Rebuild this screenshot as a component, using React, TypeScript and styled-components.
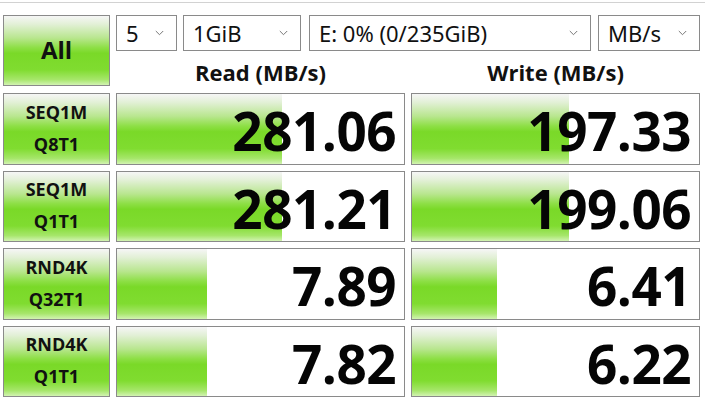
import styled, { createGlobalStyle } from 'styled-components';

const GlobalStyle = createGlobalStyle`
  html, body {
    margin: 0;
    padding: 0;
    background: #ffffff;
  }
  body {
    font-family: "Open Sans", "Noto Sans", "Liberation Sans", sans-serif;
  }
`;

const barGradient = `linear-gradient(
  to bottom,
  #f6f6f6 0%,
  #e2f0d6 12%,
  #b8e68e 32%,
  #8ddf45 46%,
  #7ad928 54%,
  #80dc30 78%,
  #a6e66a 92%,
  #d2f3b2 100%
)`;

const Window = styled.div`
  width: 705px;
  height: 400px;
  overflow: hidden;
  background: #ffffff;
  border-top: 1px solid #d2d2d2;
  margin-top: 2px;
  box-sizing: border-box;
`;

const Grid = styled.div`
  display: grid;
  grid-template-columns: 107px 289px 289px;
  grid-template-rows: 72px repeat(4, 71.5px);
  column-gap: 6px;
  row-gap: 6px;
  padding: 12px 0 0 3px;
`;

const GreenButton = styled.div`
  box-sizing: border-box;
  border: 1px solid #8a8a8a;
  background: ${barGradient};
  display: flex;
  flex-direction: column;
  align-items: center;
  justify-content: center;
  color: #111;
  font-weight: 700;
`;

const AllButton = styled(GreenButton)`
  height: 71px;
  font-size: 24px;
  padding-bottom: 2px;
`;

const TestLabel = styled(GreenButton)`
  font-size: 18px;
  line-height: 32px;
  padding-bottom: 2px;
`;

const TopArea = styled.div`
  grid-column: 2 / 4;
  display: flex;
  flex-direction: column;
`;

const Selects = styled.div`
  display: flex;
  gap: 6px;
`;

const Select = styled.div<{ $w: number; $ml?: number }>`
  box-sizing: border-box;
  width: ${(p) => p.$w}px;
  margin-left: ${(p) => p.$ml ?? 0}px;
  height: 36px;
  border: 1px solid #8a8a8a;
  background: #fff;
  display: flex;
  align-items: center;
  justify-content: space-between;
  padding: 0 12px 0 9px;
  font-family: "Noto Sans", "Open Sans", sans-serif;
  font-size: 22px;
  color: #111;
`;

const Headers = styled.div`
  display: grid;
  grid-template-columns: 289px 289px;
  column-gap: 6px;
  flex: 1;
`;

const Header = styled.div`
  display: flex;
  align-items: center;
  justify-content: center;
  font-weight: 700;
  font-size: 22px;
  color: #111;
  padding-top: 6px;
`;

const ValueCell = styled.div`
  position: relative;
  box-sizing: border-box;
  border: 1px solid #8a8a8a;
  background: #fff;
  display: flex;
  align-items: center;
  justify-content: flex-end;
`;

const Bar = styled.div`
  position: absolute;
  left: 0;
  top: 0;
  bottom: 0;
  background: ${barGradient};
`;

const Value = styled.span`
  position: relative;
  font-weight: 700;
  font-size: 53px;
  line-height: 1.1;
  color: #050505;
  padding: 5px 8px 0 0;
  letter-spacing: -0.5px;
`;

const Chevron = () => (
  <svg width="9" height="6" viewBox="0 0 9 6">
    <path d="M0.8 1 L4.5 4.7 L8.2 1" fill="none" stroke="#777" strokeWidth="1" />
  </svg>
);

const rows = [
  { a: 'SEQ1M', b: 'Q8T1', r: '281.06', rw: 165, w: '197.33', ww: 157 },
  { a: 'SEQ1M', b: 'Q1T1', r: '281.21', rw: 165, w: '199.06', ww: 157 },
  { a: 'RND4K', b: 'Q32T1', r: '7.89', rw: 90, w: '6.41', ww: 85 },
  { a: 'RND4K', b: 'Q1T1', r: '7.82', rw: 90, w: '6.22', ww: 85 },
];

export default function App() {
  return (
    <>
      <GlobalStyle />
      <Window>
        <Grid>
          <AllButton>All</AllButton>
          <TopArea>
            <Selects>
              <Select $w={61}>5<Chevron /></Select>
              <Select $w={118}>1GiB<Chevron /></Select>
              <Select $w={282} $ml={2}>E: 0% (0/235GiB)<Chevron /></Select>
              <Select $w={102} $ml={1}>MB/s<Chevron /></Select>
            </Selects>
            <Headers>
              <Header>Read (MB/s)</Header>
              <Header>Write (MB/s)</Header>
            </Headers>
          </TopArea>
          {rows.map((row, i) => (
            <>
              <TestLabel key={`l${i}`}>
                <span>{row.a}</span>
                <span>{row.b}</span>
              </TestLabel>
              <ValueCell key={`r${i}`}>
                <Bar style={{ width: row.rw }} />
                <Value>{row.r}</Value>
              </ValueCell>
              <ValueCell key={`w${i}`}>
                <Bar style={{ width: row.ww }} />
                <Value>{row.w}</Value>
              </ValueCell>
            </>
          ))}
        </Grid>
      </Window>
    </>
  );
}
